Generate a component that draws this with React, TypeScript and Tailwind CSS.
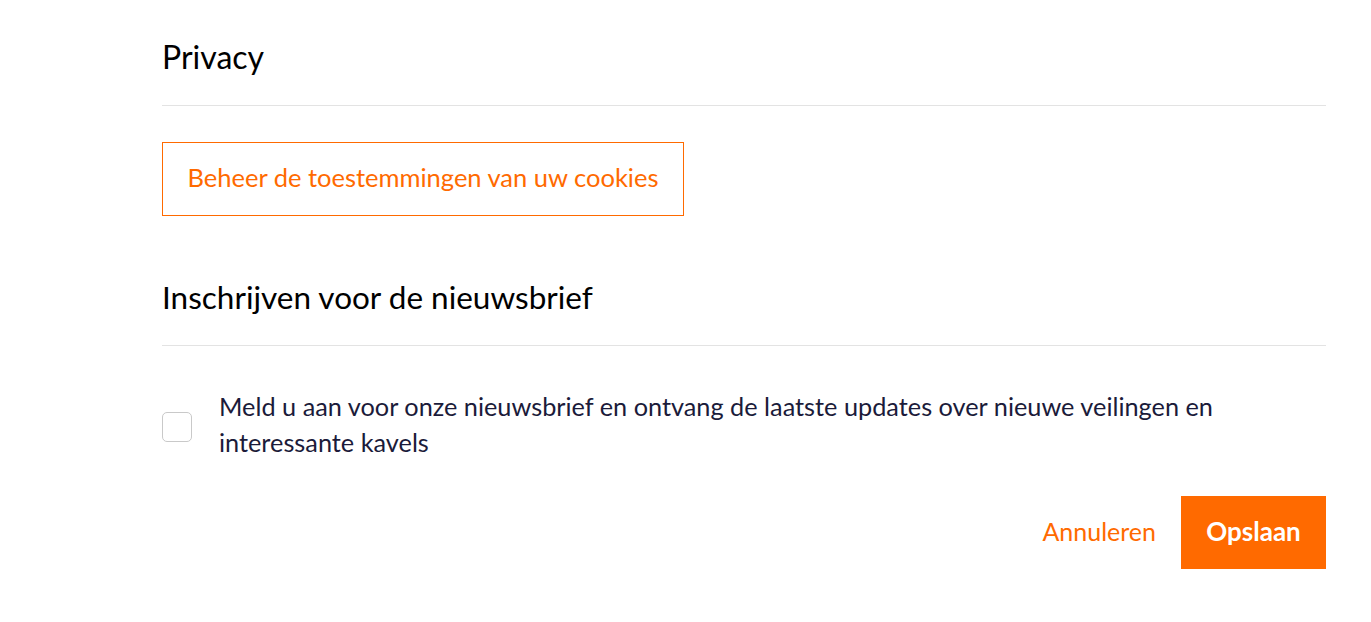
export default function App() {
  return (
    <div className="min-h-[622px] bg-white font-['Lato',sans-serif]">
      <div className="ml-[162px] mr-[45px] pt-[37px]">
        <section>
          <h2 className="text-[32px] leading-[40px] text-black pb-[28px] border-b border-[#e3e3e3]">Privacy</h2>
          <div className="pt-[36px]">
            <button className="h-[74px] w-[522px] pb-[4px] border border-[#ff6a00] text-[25.5px] text-[#ff6a00]">
              Beheer de toestemmingen van uw cookies
            </button>
          </div>
        </section>

        <section className="mt-[61px]">
          <h2 className="text-[31.5px] leading-[40px] text-black pb-[28px] border-b border-[#e3e3e3]">Inschrijven voor de nieuwsbrief</h2>
          <label className="flex items-start gap-[27px] pt-[42px]">
            <span className="mt-[24px] w-[30px] h-[30px] shrink-0 rounded-[5px] border border-[#c9c9c9] bg-white"></span>
            <span className="text-[25.3px] leading-[36px] text-[#1b1b3a]">
              Meld u aan voor onze nieuwsbrief en ontvang de laatste updates over nieuwe veilingen en
              <br />
              interessante kavels
            </span>
          </label>
        </section>

        <div className="flex justify-end items-center gap-[25px] mt-[36px]">
          <button className="pb-[2px] text-[25px] text-[#ff6a00]">Annuleren</button>
          <button className="w-[145px] h-[73px] pb-[2px] bg-[#ff6a00] text-white text-[26px] font-bold">Opslaan</button>
        </div>
      </div>
    </div>
  );
}
